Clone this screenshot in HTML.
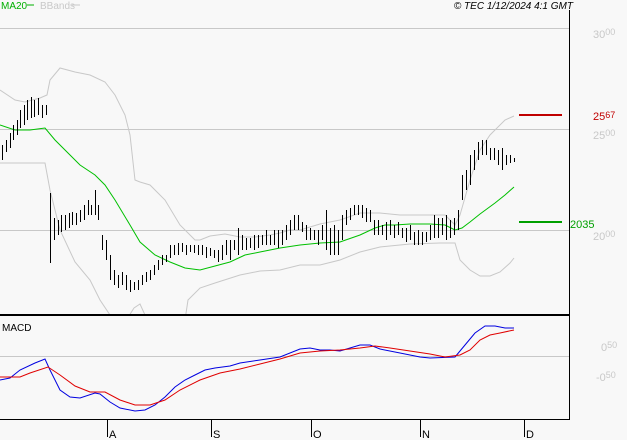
<!DOCTYPE html>
<html><head><meta charset="utf-8"><style>
html,body{margin:0;padding:0;background:#f8f8f8;}
svg{display:block;font-family:"Liberation Sans",sans-serif;}
</style></head><body>
<svg width="627" height="440" viewBox="0 0 627 440" xmlns="http://www.w3.org/2000/svg">
<rect width="627" height="440" fill="#f8f8f8"/>
<text x="1" y="9" font-size="10" fill="#00b000">MA20</text>
<line x1="27" y1="5" x2="34" y2="5" stroke="#00b000"/>
<text x="40" y="9" font-size="10" fill="#c8c8c8">BBands</text>
<line x1="72" y1="5" x2="80" y2="5" stroke="#c8c8c8"/>
<text x="573" y="9" font-size="10" font-style="italic" text-anchor="end" fill="#000">© TEC 1/12/2024 4:1 GMT</text>
<g stroke="#c8c8c8" stroke-width="1">
<line x1="0" y1="28.5" x2="569" y2="28.5"/>
<line x1="0" y1="129.5" x2="569" y2="129.5"/>
<line x1="0" y1="230.5" x2="569" y2="230.5"/>
<line x1="0" y1="356.5" x2="569" y2="356.5"/>
</g>
<g font-size="11" fill="#c8c8c8">
<text x="593" y="38">30<tspan font-size="9" dy="-3">00</tspan></text>
<text x="593" y="139">25<tspan font-size="9" dy="-3">00</tspan></text>
<text x="593" y="240">20<tspan font-size="9" dy="-3">00</tspan></text>
<text x="601" y="351">0<tspan font-size="9" dy="-3">50</tspan></text>
<text x="596" y="381">-0<tspan font-size="9" dy="-3">50</tspan></text>
</g>
<text x="593" y="120" font-size="11" fill="#c00000">25<tspan font-size="9" dy="-2">67</tspan></text>
<text x="570" y="228" font-size="11" fill="#00a000">2035</text>
<line x1="519" y1="115" x2="562" y2="115" stroke="#c00000" stroke-width="2"/>
<line x1="519" y1="222" x2="562" y2="222" stroke="#00a000" stroke-width="2"/>
<svg x="0" y="0" width="569" height="314" overflow="hidden">
<polyline fill="none" stroke="#c8c8c8" points="0,90 15,100 25,102 40,98 47,95 50,80 60,68 75,72 90,75 105,82 115,95 125,115 130,135 135,180 140,182 150,185 165,200 180,225 195,240 200,240 210,236 225,234 240,237 255,237 270,235 280,233 290,230 300,230 320,224 340,220 360,213 380,213 400,215 420,215 445,215 455,225 460,215 470,180 480,150 490,135 505,120 514,116"/>
<polyline fill="none" stroke="#c8c8c8" points="0,163 15,163 45,163 50,190 60,230 75,262 90,280 100,300 110,315 120,330 134,308 140,304 145,315"/>
<polyline fill="none" stroke="#c8c8c8" points="185,320 188,300 200,288 215,283 240,275 260,271 280,270 300,265 320,265 340,260 360,252 380,247 410,244 440,243 455,243 460,260 470,270 480,276 490,276 500,272 510,263 514,258"/>
<polyline fill="none" stroke="#00c000" points="0,125 15,130 30,130 45,128 55,140 65,150 80,165 95,175 105,185 115,200 130,225 140,242 155,255 170,262 185,268 200,270 215,266 230,262 245,255 260,252 280,248 300,245 320,243 340,242 360,235 375,228 385,225 395,225 410,224 430,224 445,225 455,230 462,228 470,222 480,214 495,203 505,195 514,187"/>
<path fill="none" stroke="#000" stroke-width="1" d="M2.5 145V160M6.5 140V152M10.5 133V148M13.5 125V140M17.5 120V135M20.5 110V128M24.5 105V125M27.5 100V120M31.5 97V118M34.5 100V117M38.5 98V115M42.5 105V118M46.5 105V115M50.5 193V263M54.5 218V240M58.5 220V235M61.5 215V232M65.5 215V230M69.5 213V228M72.5 212V225M76.5 213V225M80.5 210V222M84.5 205V220M88.5 200V215M91.5 205V215M95.5 190V215M98.5 205V220M102.5 235V250M106.5 240V260M110.5 255V280M114.5 270V285M118.5 275V288M122.5 272V285M126.5 275V290M130.5 280V292M134.5 282V290M138.5 280V290M142.5 275V285M146.5 272V282M150.5 270V280M154.5 265V275M158.5 260V270M162.5 255V265M166.5 255V262M170.5 245V258M174.5 245V255M178.5 243V255M182.5 243V252M186.5 245V255M190.5 245V252M194.5 245V253M198.5 245V255M202.5 245V255M206.5 247V258M210.5 248V256M214.5 250V258M218.5 250V262M222.5 245V260M226.5 240V255M230.5 240V260M234.5 240V250M238.5 228V255M242.5 235V250M246.5 238V250M250.5 238V248M254.5 235V250M258.5 235V248M262.5 235V245M266.5 230V245M270.5 235V245M274.5 230V245M278.5 230V248M282.5 230V245M286.5 225V240M290.5 220V235M294.5 215V230M298.5 215V230M302.5 222V232M306.5 225V240M310.5 228V240M314.5 230V240M318.5 230V245M322.5 225V240M326.5 210V250M330.5 228V255M334.5 225V255M338.5 230V255M342.5 215V240M346.5 210V225M350.5 208V220M354.5 205V215M358.5 205V215M362.5 205V218M366.5 208V222M370.5 210V222M374.5 220V235M378.5 220V235M382.5 225V235M386.5 222V240M390.5 220V235M394.5 225V238M398.5 222V235M402.5 228V238M406.5 228V242M410.5 225V240M414.5 232V245M418.5 230V245M422.5 232V245M426.5 232V242M430.5 225V240M434.5 215V238M438.5 218V238M442.5 218V235M446.5 215V240M450.5 220V238M454.5 218V235M458.5 210V230M462.5 175V200M466.5 170V190M470.5 155V185M474.5 150V170M478.5 142V160M482.5 140V155M486.5 140V155M490.5 148V160M494.5 148V160M498.5 150V165M502.5 148V170M506.5 155V165M510.5 155V163M514.5 158V162"/>
</svg>
<line x1="569.5" y1="10" x2="569.5" y2="420" stroke="#000"/>
<line x1="0" y1="315" x2="570" y2="315" stroke="#000" stroke-width="2"/>
<line x1="0" y1="419.5" x2="570" y2="419.5" stroke="#000"/>
<text x="2" y="331" font-size="10" fill="#000">MACD</text>
<polyline fill="none" stroke="#0000e0" points="0,380 10,378 20,370 35,363 45,359 50,370 60,390 70,397 80,398 95,393 100,394 110,402 120,408 135,411 145,410 155,405 165,397 175,387 185,380 195,375 205,370 215,368 230,366 240,363 260,360 280,357 300,349 310,348 320,350 330,350 340,351 350,348 360,345 370,345 380,349 400,353 420,357 430,358 455,357 465,345 475,333 485,326 495,326 505,328 514,328"/>
<polyline fill="none" stroke="#e00000" points="0,377 20,377 30,373 48,367 60,375 75,386 90,392 105,392 120,400 135,405 150,405 165,400 180,390 200,380 220,373 240,369 260,364 280,359 300,353 320,351 340,350 360,348 375,346 390,348 410,351 430,354 445,357 460,355 470,350 480,340 490,335 500,333 514,330"/>
<g stroke="#000">
<line x1="107.5" y1="420" x2="107.5" y2="437"/>
<line x1="211.5" y1="420" x2="211.5" y2="437"/>
<line x1="311.5" y1="420" x2="311.5" y2="437"/>
<line x1="420.5" y1="420" x2="420.5" y2="437"/>
<line x1="524.5" y1="420" x2="524.5" y2="437"/>
</g>
<g font-size="11" fill="#000">
<text x="109" y="438">A</text>
<text x="213" y="438">S</text>
<text x="313" y="438">O</text>
<text x="422" y="438">N</text>
<text x="526" y="438">D</text>
</g>
</svg>
</body></html>
